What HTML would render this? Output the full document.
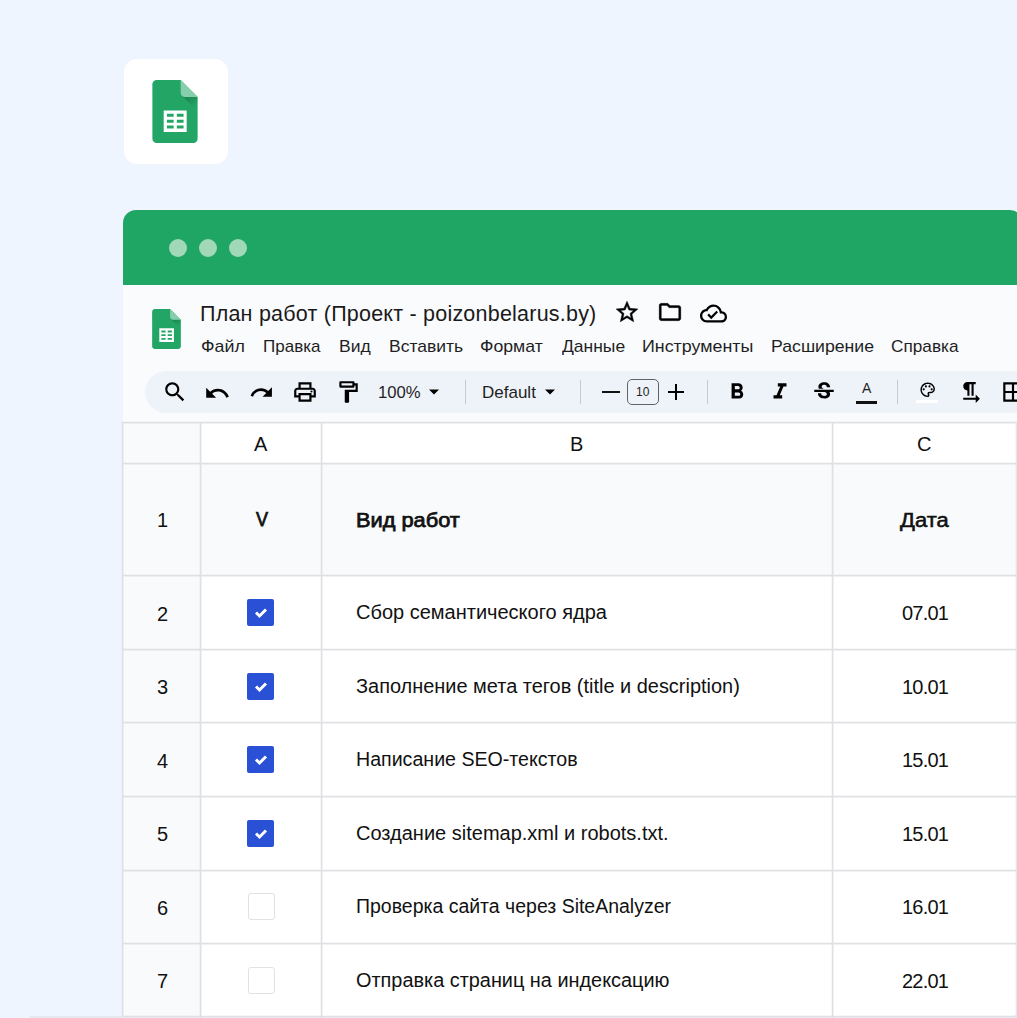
<!DOCTYPE html>
<html><head><meta charset="utf-8">
<style>
*{margin:0;padding:0;box-sizing:border-box}
html,body{width:1017px;height:1018px;overflow:hidden;background:#eff5fe;font-family:"Liberation Sans",sans-serif;color:#1a1a1a}
.a{position:absolute}
.t{position:absolute;white-space:pre;line-height:1}
.card{left:123.5px;top:58.5px;width:104.5px;height:105.5px;background:#fff;border-radius:13px}
.win{left:123px;top:210px;width:900px;height:806px;background:#fff;border-radius:13px;overflow:hidden;border-left:1px solid #e2e6ec}
.green{left:123px;top:210px;width:900px;height:75px;background:#20a664;border-radius:13px 13px 0 0}
.dot{width:18px;height:18px;border-radius:50%;background:#a0d8b8;top:239px}
.hl{position:absolute;height:1px;background:#dfe0e4;box-shadow:0 1px 0 rgba(223,224,228,.45),0 -1px 0 rgba(223,224,228,.25)}
.vl{position:absolute;width:1px;background:#dfe0e4;box-shadow:1px 0 0 rgba(223,224,228,.45),-1px 0 0 rgba(223,224,228,.25)}
.gray{position:absolute;background:#f9fafb}
.menu{font-size:17px;top:338px;color:#1f1f1f}
.cell{font-size:20px;color:#111}
.dt{letter-spacing:-0.8px}
.cb{position:absolute;left:247px;width:27px;height:27px;border-radius:2px;background:#2a50d6}

.cbe{position:absolute;left:247.5px;width:27.5px;height:27px;border-radius:3px;border:1.5px solid #e1e2e5;background:#fff}
.ico{position:absolute}
</style></head><body>
<div class="a card"></div>
<!-- big sheets icon -->
<svg class="ico" style="left:152px;top:80px" width="46" height="63" viewBox="0 0 47 65.5"><defs><linearGradient id="fg" x1="0.5" y1="0.1" x2="0.9" y2="0.6"><stop offset="0" stop-color="#0b5a2f" stop-opacity=".35"/><stop offset="1" stop-color="#0b5a2f" stop-opacity="0"/></linearGradient></defs>
<path d="M29.4 0H4.4C2 0 0 2 0 4.4v56.7c0 2.4 2 4.4 4.4 4.4h38.2c2.4 0 4.4-2 4.4-4.4V17.6z" fill="#23a566"/>
<path d="M30.7 16.3L47 32.7V17.6z" fill="url(#fg)"/>
<path d="M29.4 0L47 17.6H33.8c-2.4 0-4.4-2-4.4-4.4z" fill="#87ceac"/>
<path d="M11.75 31.6h23.9v22.5h-23.9z M15.1 35.1v3.2h7v-3.2z M25.4 35.1v3.2h7v-3.2z M15.1 41.2v3.2h7v-3.2z M25.4 41.2v3.2h7v-3.2z M15.1 47.3v3.2h7v-3.2z M25.4 47.3v3.2h7v-3.2z" fill="#fff" fill-rule="evenodd"/>
</svg>

<div class="a win"></div>
<div class="a green"></div>
<div class="a" style="left:123px;top:285px;width:894px;height:138px;background:#fafbfd"></div>
<div class="a dot" style="left:169px"></div>
<div class="a dot" style="left:199px"></div>
<div class="a dot" style="left:229px"></div>

<!-- small sheets icon -->
<svg class="ico" style="left:152px;top:309px" width="29" height="40" viewBox="0 0 47 65.5">
<path d="M29.4 0H4.4C2 0 0 2 0 4.4v56.7c0 2.4 2 4.4 4.4 4.4h38.2c2.4 0 4.4-2 4.4-4.4V17.6z" fill="#23a566"/>
<path d="M30.7 16.3L47 32.7V17.6z" fill="url(#fg)"/>
<path d="M29.4 0L47 17.6H33.8c-2.4 0-4.4-2-4.4-4.4z" fill="#87ceac"/>
<path d="M11.75 31.6h23.9v22.5h-23.9z M15.1 35.1v3.2h7v-3.2z M25.4 35.1v3.2h7v-3.2z M15.1 41.2v3.2h7v-3.2z M25.4 41.2v3.2h7v-3.2z M15.1 47.3v3.2h7v-3.2z M25.4 47.3v3.2h7v-3.2z" fill="#fff" fill-rule="evenodd"/>
</svg>

<div class="t" style="left:200px;top:304px;font-size:21.5px;letter-spacing:0.22px;color:#1a1a1a">План работ (Проект - poizonbelarus.by)</div>

<div class="t menu" style="transform:scaleX(1.05);transform-origin:0 0;left:201px">Файл</div>
<div class="t menu" style="left:263px">Правка</div>
<div class="t menu" style="transform:scaleX(1.03);transform-origin:0 0;left:339px">Вид</div>
<div class="t menu" style="transform:scaleX(1.03);transform-origin:0 0;left:389px">Вставить</div>
<div class="t menu" style="transform:scaleX(1.04);transform-origin:0 0;left:480px">Формат</div>
<div class="t menu" style="transform:scaleX(1.028);transform-origin:0 0;left:562px">Данные</div>
<div class="t menu" style="transform:scaleX(1.05);transform-origin:0 0;left:642px">Инструменты</div>
<div class="t menu" style="transform:scaleX(1.04);transform-origin:0 0;left:771px">Расширение</div>
<div class="t menu" style="transform:scaleX(1.012);transform-origin:0 0;left:891px">Справка</div>

<!-- toolbar -->
<div class="a" style="left:144.5px;top:370.5px;width:900px;height:42.5px;border-radius:21.5px;background:#eef2f9"></div>


<!-- toolbar icons -->
<svg class="ico" style="left:162px;top:379px" width="26" height="26" viewBox="0 0 24 24"><path d="M15.5 14h-.79l-.28-.27C15.41 12.59 16 11.11 16 9.5 16 5.91 13.09 3 9.5 3S3 5.91 3 9.5 5.91 16 9.5 16c1.61 0 3.09-.59 4.23-1.57l.27.28v.79l5 4.99L20.49 19l-4.99-5zm-6 0C7.01 14 5 11.99 5 9.5S7.01 5 9.5 5 14 7.01 14 9.5 11.99 14 9.5 14z"/></svg>
<svg class="ico" style="left:204px;top:379.5px" width="26.5" height="26.5" viewBox="0 0 24 24"><path d="M12.5 8c-2.65 0-5.05.99-6.9 2.6L2 7v9h9l-3.62-3.62c1.39-1.16 3.16-1.88 5.12-1.88 3.54 0 6.55 2.31 7.6 5.5l2.37-.78C21.08 11.03 17.15 8 12.5 8z"/></svg>
<svg class="ico" style="left:249px;top:380px" width="25" height="25" viewBox="0 0 24 24"><path d="M18.4 10.6C16.55 8.99 14.15 8 11.5 8c-4.65 0-8.58 3.03-9.96 7.22L3.9 16c1.05-3.19 4.05-5.5 7.6-5.5 1.95 0 3.73.72 5.12 1.88L13 16h9V7l-3.6 3.6z"/></svg>
<svg class="ico" style="left:292px;top:379px" width="26" height="26" viewBox="0 0 24 24"><path d="M19 8h-1V3H6v5H5c-1.66 0-3 1.34-3 3v6h4v4h12v-4h4v-6c0-1.66-1.34-3-3-3zM8 5h8v3H8V5zm8 14H8v-4h8v4zm2-4v-2H6v2H4v-4c0-.55.45-1 1-1h14c.55 0 1 .45 1 1v4h-2z"/><circle cx="18" cy="11.5" r="1"/></svg>
<svg class="ico" style="left:335px;top:379px" width="26" height="26" viewBox="0 0 24 24"><path d="M18 4V3c0-.55-.45-1-1-1H5c-.55 0-1 .45-1 1v4c0 .55.45 1 1 1h12c.55 0 1-.45 1-1V6h1v4H9v11c0 .55.45 1 1 1h2c.55 0 1-.45 1-1v-9h8V4h-3zm-2 2H6V4h10v2z"/></svg>
<div class="t" style="left:378px;top:384.5px;font-size:16px;transform:scaleX(1.04);transform-origin:0 0;color:#1f1f1f">100%</div>
<svg class="ico" style="left:429px;top:389px" width="10" height="6" viewBox="0 0 10 5"><path d="M0 0h10L5 5z"/></svg>
<div class="a" style="left:465px;top:380px;width:1px;height:24px;background:#c7cbd1"></div>
<div class="t" style="left:482px;top:384px;font-size:17px;color:#1f1f1f">Default</div>
<svg class="ico" style="left:545px;top:389px" width="10" height="6" viewBox="0 0 10 5"><path d="M0 0h10L5 5z"/></svg>
<div class="a" style="left:580px;top:380px;width:1px;height:24px;background:#c7cbd1"></div>
<div class="a" style="left:601.5px;top:391px;width:18px;height:2px;background:#111"></div>
<div class="a" style="left:627px;top:379px;width:32px;height:26px;border:1px solid #5f6368;border-radius:5px"></div>
<div class="t" style="left:636px;top:386px;font-size:12px;color:#1f1f1f">10</div>
<svg class="ico" style="left:668px;top:384px" width="16" height="16" viewBox="0 0 16 16"><path d="M7 0h2v7h7v2H9v7H7V9H0V7h7z"/></svg>
<div class="a" style="left:707px;top:380px;width:1px;height:24px;background:#c7cbd1"></div>
<svg class="ico" style="left:724px;top:379px" width="26" height="26" viewBox="0 0 24 24"><path d="M15.6 10.79c.97-.67 1.65-1.77 1.65-2.79 0-2.26-1.75-4-4-4H7v14h7.04c2.09 0 3.71-1.7 3.71-3.79 0-1.52-.86-2.82-2.1-3.42zM10 6.5h3c.83 0 1.5.67 1.5 1.5s-.67 1.5-1.5 1.5h-3v-3zm3.5 9H10v-3h3.5c.83 0 1.5.67 1.5 1.5s-.67 1.5-1.5 1.5z"/></svg>
<svg class="ico" style="left:767px;top:379px" width="26" height="26" viewBox="0 0 24 24"><path d="M10 4v3h2.21l-3.42 8H6v3h8v-3h-2.21l3.42-8H18V4z"/></svg>
<svg class="ico" style="left:810.5px;top:379px" width="26" height="26" viewBox="0 0 24 24"><path d="M7.24 8.75c-.26-.48-.39-1.03-.39-1.67 0-.61.13-1.16.4-1.67.26-.5.63-.93 1.11-1.29.48-.35 1.05-.63 1.7-.83.66-.19 1.39-.29 2.18-.29.81 0 1.54.11 2.21.34.66.22 1.23.54 1.69.94.47.4.83.88 1.08 1.43.25.55.38 1.15.38 1.81h-3.01c0-.31-.05-.59-.15-.85-.09-.27-.24-.49-.44-.68-.2-.19-.45-.33-.75-.44-.3-.1-.66-.16-1.06-.16-.39 0-.74.04-1.03.13-.29.09-.53.21-.72.36-.19.16-.34.34-.44.55-.1.21-.15.43-.15.66 0 .48.25.88.74 1.21.38.25.77.48 1.41.7H7.39c-.05-.08-.11-.17-.15-.25zM21 12v-2H3v2h9.62c.18.07.4.14.55.2.37.17.66.34.87.51.21.17.35.36.43.57.07.2.11.43.11.69 0 .23-.05.45-.14.66-.09.2-.23.38-.42.53-.19.15-.42.26-.71.35-.29.08-.63.13-1.010.13-.43 0-.83-.04-1.18-.13s-.66-.23-.91-.42c-.25-.19-.45-.44-.59-.75-.14-.31-.25-.76-.25-1.21H6.4c0 .55.08 1.13.24 1.58.16.45.37.85.65 1.21.28.35.6.66.98.92.37.26.78.48 1.22.65.44.17.9.3 1.38.39.48.08.96.13 1.44.13.8 0 1.53-.09 2.180-.28s1.21-.45 1.67-.79c.46-.34.82-.77 1.070-1.27s.38-1.07.38-1.71c0-.6-.1-1.14-.31-1.610-.05-.11-.11-.23-.17-.33H21z"/></svg>
<div class="t" style="left:862px;top:381px;font-size:14px;color:#1f1f1f">A</div>
<div class="a" style="left:856px;top:400.5px;width:21px;height:3px;background:#111"></div>
<div class="a" style="left:897px;top:380px;width:1px;height:24px;background:#c7cbd1"></div>
<svg class="ico" style="left:918.5px;top:380.5px" width="17.4" height="17.4" viewBox="0 0 24 24"><path d="M12 22C6.49 22 2 17.51 2 12S6.49 2 12 2s10 4.04 10 9c0 3.31-2.69 6-6 6h-1.77c-.28 0-.5.22-.5.5 0 .12.05.23.13.33.41.47.64 1.06.64 1.67 0 1.38-1.12 2.5-2.5 2.5zm0-18c-4.410 0-8 3.59-8 8s3.59 8 8 8c.28 0 .5-.22.5-.5 0-.16-.08-.28-.14-.35-.41-.46-.63-1.05-.63-1.65 0-1.38 1.12-2.5 2.5-2.5H16c2.21 0 4-1.79 4-4 0-3.86-3.59-7-8-7z"/><circle cx="6.5" cy="11.5" r="1.5"/><circle cx="9.5" cy="7.5" r="1.5"/><circle cx="14.5" cy="7.5" r="1.5"/><circle cx="17.5" cy="11.5" r="1.5"/></svg>
<div class="a" style="left:916px;top:400px;width:22px;height:3px;background:#fff"></div>
<svg class="ico" style="left:958px;top:379.5px" width="25" height="25" viewBox="0 0 24 24"><path d="M9 10v5h2V4h2v11h2V4h2V2H9C6.79 2 5 3.790 5 6s1.79 4 4 4zm12 8-4-4v3H5v2h12v3l4-4z"/></svg>
<svg class="ico" style="left:1000px;top:379px" width="26" height="26" viewBox="0 0 24 24"><path d="M3 3v18h18V3H3zm8 16H5v-6h6v6zm0-8H5V5h6v6zm8 8h-6v-6h6v6zm0-8h-6V5h6v6z"/></svg>

<!-- title icons -->
<svg class="ico" style="left:614px;top:299px" width="26" height="26" viewBox="0 0 24 24"><path stroke="#000" stroke-width="0.45" stroke-linejoin="miter" d="M22 9.24l-7.19-.62L12 2 9.19 8.63 2 9.24l5.46 4.73L5.82 21 12 17.27 18.18 21l-1.63-7.03L22 9.24zM12 15.4l-3.76 2.27 1-4.28-3.32-2.88 4.38-.38L12 6.1l1.71 4.04 4.380.38-3.32 2.88 1 4.28L12 15.4z"/></svg>
<svg class="ico" style="left:657px;top:299px" width="26" height="26" viewBox="0 0 24 24"><path stroke="#000" stroke-width="0.3" d="M9.17 6l2 2H20v10H4V6h5.17M10 4H4c-1.1 0-1.99.9-1.99 2L2 18c0 1.1.9 2 2 2h16c1.1 0 2-.9 2-2V8c0-1.1-.9-2-2-2h-8l-2-2z"/></svg>
<svg class="ico" style="left:700px;top:300px" width="27" height="27" viewBox="0 0 24 24"><path d="M19.35 10.04C18.67 6.59 15.64 4 12 4 9.11 4 6.6 5.64 5.35 8.04 2.34 8.36 0 10.91 0 14c0 3.31 2.69 6 6 6h13c2.76 0 5-2.24 5-5 0-2.64-2.05-4.78-4.65-4.960zM19 18H6c-2.21 0-4-1.79-4-4 0-2.05 1.53-3.76 3.56-3.97l1.07-.11.5-.95C8.08 7.14 9.94 6 12 6c2.62 0 4.88 1.86 5.39 4.43l.3 1.5 1.53.11c1.56.1 2.78 1.41 2.78 2.96 0 1.65-1.35 3-3 3zm-9-3.82l-2.09-2.09L6.5 13.5 10 17l6.01-6.01-1.41-1.41z"/></svg>

<!-- grid backgrounds -->
<div class="gray" style="left:123px;top:423px;width:78px;height:40px"></div>
<div class="gray" style="left:123px;top:463px;width:894px;height:113px"></div>
<div class="gray" style="left:123px;top:576px;width:78px;height:441px"></div>

<!-- grid lines -->
<div class="hl" style="left:122px;top:422px;width:895px"></div>
<div class="hl" style="left:122px;top:463px;width:895px"></div>
<div class="hl" style="left:122px;top:575px;width:895px"></div>
<div class="hl" style="left:122px;top:649px;width:895px"></div>
<div class="hl" style="left:122px;top:722px;width:895px"></div>
<div class="hl" style="left:122px;top:796px;width:895px"></div>
<div class="hl" style="left:122px;top:870px;width:895px"></div>
<div class="hl" style="left:122px;top:943px;width:895px"></div>
<div class="hl" style="left:122px;top:1016px;width:895px"></div>
<div class="vl" style="left:122px;top:422px;height:596px"></div>
<div class="vl" style="left:200px;top:422px;height:596px"></div>
<div class="vl" style="left:321px;top:422px;height:596px"></div>
<div class="vl" style="left:832px;top:422px;height:596px"></div>
<div class="vl" style="left:1016px;top:422px;height:596px;background:#e3e6ec"></div>

<div class="a" style="left:30px;top:1016px;width:93px;height:2px;background:#e4e8ef"></div>
<!-- header letters -->
<div class="t cell" style="left:254px;top:434px">A</div>
<div class="t cell" style="left:570px;top:434px">B</div>
<div class="t cell" style="left:917px;top:434px">C</div>

<!-- row numbers -->
<div class="t cell" style="left:157px;top:510px">1</div>
<div class="t cell" style="left:157px;top:603.5px">2</div>
<div class="t cell" style="left:157px;top:677px">3</div>
<div class="t cell" style="left:157px;top:750.5px">4</div>
<div class="t cell" style="left:157px;top:824px">5</div>
<div class="t cell" style="left:157px;top:897.5px">6</div>
<div class="t cell" style="left:157px;top:971px">7</div>

<div class="t cell" style="transform:scaleX(0.9);transform-origin:0 0;left:255.5px;top:508.5px;-webkit-text-stroke:0.75px #111">V</div>
<div class="t cell" style="transform:scaleX(1.09);transform-origin:0 0;left:356px;top:509.5px;-webkit-text-stroke:0.75px #111">Вид работ</div>
<div class="t cell" style="transform:scaleX(1.1);transform-origin:0 0;left:900px;top:509.5px;-webkit-text-stroke:0.55px #111">Дата</div>

<div class="t cell" style="left:356px;top:602px">Сбор семантического ядра</div>
<div class="t cell" style="transform:scaleX(0.997);transform-origin:0 0;left:356px;top:676px">Заполнение мета тегов (title и description)</div>
<div class="t cell" style="transform:scaleX(0.98);transform-origin:0 0;left:356px;top:749px">Написание SEO-текстов</div>
<div class="t cell" style="left:356px;top:823px">Создание sitemap.xml и robots.txt.</div>
<div class="t cell" style="transform:scaleX(0.974);transform-origin:0 0;left:356px;top:896px">Проверка сайта через SiteAnalyzer</div>
<div class="t cell" style="transform:scaleX(0.994);transform-origin:0 0;left:356px;top:970px">Отправка страниц на индексацию</div>

<div class="t cell dt" style="left:902px;top:602.5px">07.01</div>
<div class="t cell dt" style="left:902px;top:676.5px">10.01</div>
<div class="t cell dt" style="left:902px;top:749.5px">15.01</div>
<div class="t cell dt" style="left:902px;top:823.5px">15.01</div>
<div class="t cell dt" style="left:902px;top:896.5px">16.01</div>
<div class="t cell dt" style="left:902px;top:970.5px">22.01</div>

<div class="cb" style="top:599px"><svg width="27" height="27" style="position:absolute;left:0;top:0"><polyline points="9,13.5 12.5,17 19,10.5" fill="none" stroke="#fff" stroke-width="3"/></svg></div>
<div class="cb" style="top:673px"><svg width="27" height="27" style="position:absolute;left:0;top:0"><polyline points="9,13.5 12.5,17 19,10.5" fill="none" stroke="#fff" stroke-width="3"/></svg></div>
<div class="cb" style="top:746px"><svg width="27" height="27" style="position:absolute;left:0;top:0"><polyline points="9,13.5 12.5,17 19,10.5" fill="none" stroke="#fff" stroke-width="3"/></svg></div>
<div class="cb" style="top:820px"><svg width="27" height="27" style="position:absolute;left:0;top:0"><polyline points="9,13.5 12.5,17 19,10.5" fill="none" stroke="#fff" stroke-width="3"/></svg></div>
<div class="cbe" style="top:893px"></div>
<div class="cbe" style="top:967px"></div>
</body></html>
